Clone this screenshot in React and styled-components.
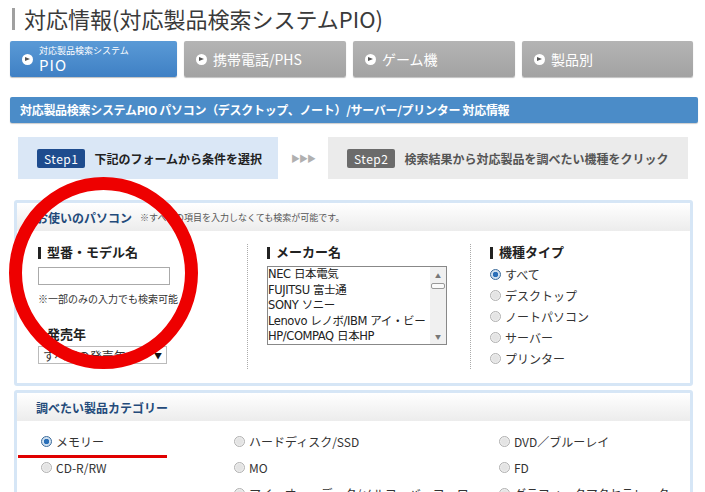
import React from 'react';
import styled, { createGlobalStyle } from 'styled-components';

const GlobalStyle = createGlobalStyle`
    body {
        margin: 0;
        background: #fff;
        font-family: "Noto Sans CJK JP", "Noto Sans", sans-serif;
        color: #333;
    }
`;

const tabs = [
    { label: '携帯電話/PHS' },
    { label: 'ゲーム機' },
    { label: '製品別' }
];

const makers = ['NEC 日本電気', 'FUJITSU 富士通', 'SONY ソニー', 'Lenovo レノボ/IBM アイ・ビー', 'HP/COMPAQ 日本HP'];
const types = ['すべて', 'デスクトップ', 'ノートパソコン', 'サーバー', 'プリンター'];
const categories = [
    'メモリー', 'ハードディスク/SSD', 'DVD／ブルーレイ',
    'CD-R/RW', 'MO', 'FD',
    '', 'アイ・オー・データ/メルコ・バッファロー', 'グラフィックアクセラレータ'
];

const Radio = ({ checked, children }) => (
    <RadioRow>
        <RadioDot $checked={ checked } />
        <span>{ children }</span>
    </RadioRow>
);

const App = () => {
    return (
        <Root>
            <GlobalStyle />
            <Title>対応情報(対応製品検索システムPIO)</Title>

            <TabRow>
                <Tab $active>
                    <TabIcon />
                    <TabStack>
                        <small>対応製品検索システム</small>
                        <span>PIO</span>
                    </TabStack>
                </Tab>
                { tabs.map(t => (
                    <Tab key={ t.label }>
                        <TabIcon />
                        <span>{ t.label }</span>
                    </Tab>
                )) }
            </TabRow>

            <BlueBar>対応製品検索システムPIO パソコン（デスクトップ、ノート）/サーバー/プリンター 対応情報</BlueBar>

            <StepRow>
                <StepBox $current>
                    <Badge $current>Step1</Badge>
                    <span>下記のフォームから条件を選択</span>
                </StepBox>
                <Arrows>▶▶▶</Arrows>
                <StepBox>
                    <Badge>Step2</Badge>
                    <span>検索結果から対応製品を調べたい機種をクリック</span>
                </StepBox>
            </StepRow>

            <Panel>
                <PanelHead>
                    <strong>お使いのパソコン</strong>
                    <small>※すべての項目を入力しなくても検索が可能です。</small>
                </PanelHead>
                <Columns>
                    <Column $w="209px">
                        <Heading>型番・モデル名</Heading>
                        <TextBox />
                        <Note>※一部のみの入力でも検索可能</Note>
                        <Heading $top="20px">発売年</Heading>
                        <SelectBox>
                            <span>すべての発売年</span>
                            <span>▼</span>
                        </SelectBox>
                    </Column>
                    <Column $w="223px" $divided>
                        <Heading>メーカー名</Heading>
                        <ListBox>
                            <ListItems>
                                { makers.map(m => <div key={ m }>{ m }</div>) }
                            </ListItems>
                            <ScrollBar>
                                <span>▲</span>
                                <Thumb />
                                <Grow />
                                <span>▼</span>
                            </ScrollBar>
                        </ListBox>
                    </Column>
                    <Column $divided>
                        <Heading>機種タイプ</Heading>
                        <RadioList>
                            { types.map((t, i) => <Radio key={ t } checked={ i === 0 }>{ t }</Radio>) }
                        </RadioList>
                    </Column>
                </Columns>
            </Panel>

            <Panel $second>
                <PanelHead>
                    <strong>調べたい製品カテゴリー</strong>
                </PanelHead>
                <CategoryGrid>
                    { categories.map((c, i) => (
                        c ? <Radio key={ i } checked={ i === 0 }>{ c }</Radio> : <div key={ i } />
                    )) }
                </CategoryGrid>
            </Panel>

            <Circle />
            <Underline />
        </Root>
    );
};

export default App;

const Root = styled.div`
    position: relative;
    width: 705px;
    height: 492px;
    overflow: hidden;
    padding: 0 7px 0 10px;
    box-sizing: border-box;
`;

const Title = styled.h1`
    margin: 0;
    padding: 5px 0 0 14px;
    height: 41px;
    box-sizing: border-box;
    position: relative;
    font-size: 22px;
    font-weight: 400;
    color: #3a3a3a;
    line-height: 26px;

    &::before {
        content: "";
        position: absolute;
        left: 2px;
        top: 8px;
        width: 3px;
        height: 22px;
        background: #a0a0a0;
    }
`;

const TabRow = styled.div`
    display: grid;
    grid-template-columns: 167px 162px 162px 171px;
    gap: 7px;
    margin-right: 5px;
    height: 36px;
`;

const Tab = styled.div`
    display: flex;
    align-items: center;
    gap: 6px;
    padding-left: 12px;
    border-radius: 2px;
    color: #fff;
    font-size: 14px;
    background: ${ ({ $active }) => $active
        ? 'linear-gradient(#5a9ad6, #3f80c4)'
        : 'linear-gradient(#b4b4b4, #a2a2a2)' };
    box-shadow: 0 1px 1px rgba(0,0,0,0.25);
`;

const TabIcon = styled.i`
    width: 11px;
    height: 11px;
    border-radius: 50%;
    background: #fff;
    position: relative;
    flex-shrink: 0;

    &::after {
        content: "";
        position: absolute;
        left: 3px;
        top: 3px;
        border-left: 5px solid #555;
        border-top: 2.5px solid transparent;
        border-bottom: 2.5px solid transparent;
    }
`;

const TabStack = styled.div`
    display: flex;
    flex-direction: column;

    small {
        font-size: 9px;
        line-height: 11px;
    }

    span {
        font-size: 15px;
        line-height: 17px;
        letter-spacing: 1px;
    }
`;

const BlueBar = styled.div`
    margin-top: 20px;
    height: 26px;
    line-height: 26px;
    padding-left: 10px;
    background: #4b8cc8;
    color: #fff;
    font-size: 12px;
    font-weight: 700;
    border-radius: 2px;
    box-shadow: 0 1px 1px rgba(0,0,0,0.2);
    letter-spacing: -0.3px;
`;

const StepRow = styled.div`
    display: flex;
    align-items: center;
    margin: 14px 10px 0 8px;
    height: 42px;
`;

const StepBox = styled.div`
    display: flex;
    align-items: center;
    gap: 9px;
    height: 100%;
    padding-left: 19px;
    box-sizing: border-box;
    width: ${ ({ $current }) => $current ? '260px' : '360px' };
    background: ${ ({ $current }) => $current ? '#dae7f6' : '#ebebeb' };
    color: ${ ({ $current }) => $current ? '#222' : '#555' };
    font-size: 12px;
    font-weight: 700;
`;

const Badge = styled.span`
    display: inline-block;
    padding: 0 7px;
    height: 19px;
    line-height: 19px;
    font-size: 12px;
    font-weight: 400;
    color: #fff;
    letter-spacing: 0.5px;
    border-radius: 2px;
    background: ${ ({ $current }) => $current ? '#1e4c8e' : '#6b6b6b' };
`;

const Arrows = styled.div`
    width: 50px;
    text-align: center;
    font-size: 9px;
    letter-spacing: -1px;
    color: #b0b0b0;
`;

const Panel = styled.div`
    margin: ${ ({ $second }) => $second ? '4px 5px 0 4px' : '21px 5px 0 4px' };
    border: 3px solid #d6e6f6;
    border-radius: 3px;
    background: #fff;
    height: ${ ({ $second }) => $second ? 'auto' : '186px' };
    box-sizing: border-box;
`;

const PanelHead = styled.div`
    height: 28px;
    display: flex;
    align-items: center;
    gap: 8px;
    padding-left: 19px;
    background: linear-gradient(#ffffff, #ececec);

    strong {
        font-size: 12px;
        color: #234a7a;
    }

    small {
        font-size: 9px;
        color: #555;
    }
`;

const Columns = styled.div`
    display: flex;
    padding: 13px 0 0 21px;
`;

const Column = styled.div`
    width: ${ ({ $w }) => $w || 'auto' };
    padding-left: ${ ({ $divided }) => $divided ? '19px' : '0' };
    border-left: ${ ({ $divided }) => $divided ? '1px dotted #aaa' : 'none' };
    height: 125px;
    box-sizing: border-box;
`;

const Heading = styled.div`
    margin-top: ${ ({ $top }) => $top || '0' };
    font-size: 13px;
    font-weight: 700;
    color: #222;
    line-height: 16px;
    padding-left: 9px;
    position: relative;

    &::before {
        content: "";
        position: absolute;
        left: 0;
        top: 3px;
        width: 3px;
        height: 12px;
        background: #222;
    }
`;

const TextBox = styled.div`
    margin-top: 7px;
    width: 132px;
    height: 18px;
    border: 1px solid #aaa;
    box-sizing: border-box;
`;

const Note = styled.div`
    margin-top: 6px;
    font-size: 10px;
    color: #333;
`;

const SelectBox = styled.div`
    margin-top: 4px;
    width: 129px;
    height: 18px;
    border: 1px solid #bbb;
    box-sizing: border-box;
    display: flex;
    justify-content: space-between;
    align-items: center;
    padding: 0 4px;
    font-size: 12px;
    color: #333;

    span:last-child {
        font-size: 8px;
        color: #111;
    }
`;

const ListBox = styled.div`
    margin-top: 6px;
    width: 180px;
    height: 79px;
    border: 1px solid #888;
    box-sizing: border-box;
    display: flex;
`;

const ListItems = styled.div`
    flex: 1;
    font-family: "DejaVu Sans", "Noto Sans CJK JP", sans-serif;
    font-size: 11.5px;
    line-height: 15.5px;
    color: #222;
    white-space: nowrap;
    overflow: hidden;
    letter-spacing: -0.4px;
`;

const ScrollBar = styled.div`
    width: 16px;
    background: #f0f0f0;
    display: flex;
    flex-direction: column;
    align-items: center;
    font-size: 6px;
    color: #777;
    padding: 4px 0 3px;
    box-sizing: border-box;
`;

const Thumb = styled.div`
    width: 14px;
    height: 6px;
    margin-top: 3px;
    border: 1px solid #999;
    border-radius: 2px;
    background: #fafafa;
    box-sizing: border-box;
`;

const Grow = styled.div`
    flex: 1;
`;

const RadioList = styled.div`
    margin-top: 6px;
    display: flex;
    flex-direction: column;
    gap: 4px;
`;

const RadioRow = styled.div`
    display: flex;
    align-items: center;
    gap: 4px;
    height: 17px;
    font-size: 12px;
    color: #333;
    white-space: nowrap;
`;

const RadioDot = styled.i`
    width: 11px;
    height: 11px;
    border-radius: 50%;
    box-sizing: border-box;
    border: 1px solid ${ ({ $checked }) => $checked ? '#3a6a9a' : '#b0b0b0' };
    background: ${ ({ $checked }) => $checked
        ? 'radial-gradient(circle, #2a6fb8 0 2.5px, #cfe0f0 3px)'
        : 'radial-gradient(circle, #e4e4e4 0 3px, #f8f8f8 5px)' };
    flex-shrink: 0;
`;

const CategoryGrid = styled.div`
    display: grid;
    grid-template-columns: 193px 265px 1fr;
    row-gap: 9px;
    padding: 12px 0 0 24px;
`;

const Circle = styled.div`
    position: absolute;
    left: 9px;
    top: 177px;
    width: 189px;
    height: 192px;
    border: 13px solid #ee0000;
    border-radius: 50%;
    box-sizing: border-box;
    pointer-events: none;
`;

const Underline = styled.div`
    position: absolute;
    left: 18px;
    top: 455px;
    width: 149px;
    height: 3px;
    background: #e00000;
`;
